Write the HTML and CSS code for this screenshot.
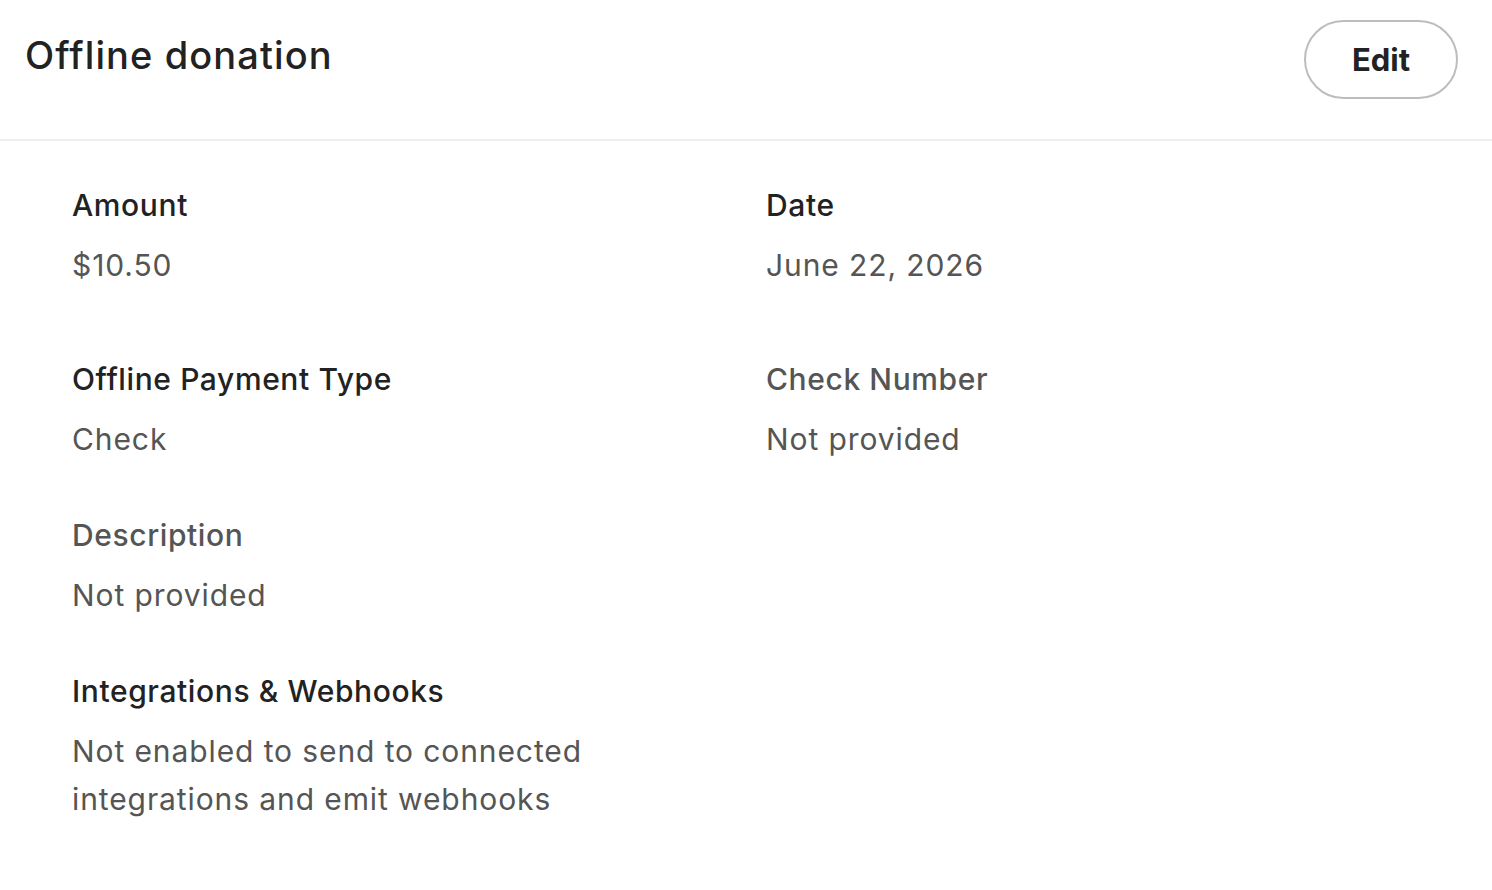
FILE: index.html
```html
<!DOCTYPE html>
<html lang="en">
<head>
    <meta charset="UTF-8">
    <meta name="viewport" content="width=device-width, initial-scale=1.0">
    <title>Offline donation</title>
    <link rel="stylesheet" href="styles.css">
</head>
<body>

    <div class="header">
        <h1>Offline donation</h1>
        <button type="button" class="edit-btn">Edit</button>
    </div>

    <div class="details">
        <div class="grid">
            <div class="field">
                <div class="label">Amount</div>
                <div class="value">$10.50</div>
            </div>
            <div class="field">
                <div class="label">Date</div>
                <div class="value">June 22, 2026</div>
            </div>
            <div class="field">
                <div class="label">Offline Payment Type</div>
                <div class="value">Check</div>
            </div>
            <div class="field">
                <div class="label muted">Check Number</div>
                <div class="value">Not provided</div>
            </div>
        </div>
        <div class="field">
            <div class="label muted">Description</div>
            <div class="value">Not provided</div>
        </div>
        <div class="field">
            <div class="label">Integrations &amp; Webhooks</div>
            <div class="value narrow">Not enabled to send to connected integrations and emit webhooks</div>
        </div>
    </div>

</body>
</html>
```

FILE: styles.css
```css
body {
    font-family: 'Inter', 'Noto Sans', sans-serif;
    background-color: #ffffff;
    color: #222;
    margin: 0;
    padding: 0;
}
.header {
    display: flex;
    justify-content: space-between;
    align-items: flex-start;
    padding: 20px 34px 40px 25px;
    border-bottom: 2px solid #eeeeee;
}
h1 {
    margin: 12px 0 0;
    font-size: 38px;
    font-weight: 500;
    letter-spacing: 1.1px;
    color: #222;
    line-height: 46px;
}
.edit-btn {
    font-family: inherit;
    background-color: #ffffff;
    color: #222;
    border: 2px solid #bdbdbd;
    border-radius: 40px;
    width: 154px;
    height: 79px;
    font-size: 31px;
    font-weight: 700;
    cursor: pointer;
}
.details {
    display: flex;
    flex-direction: column;
    gap: 54px;
    padding: 46px 72px;
}
.grid {
    display: grid;
    grid-template-columns: 694px 1fr;
    row-gap: 72px;
}
.label {
    font-size: 30px;
    font-weight: 500;
    letter-spacing: 0.6px;
    color: #222;
    line-height: 36px;
}
.label.muted {
    color: #555;
}
.value {
    margin-top: 18px;
    font-size: 30px;
    letter-spacing: 0.9px;
    color: #555;
    line-height: 48px;
}
.value.narrow {
    max-width: 540px;
}
```
